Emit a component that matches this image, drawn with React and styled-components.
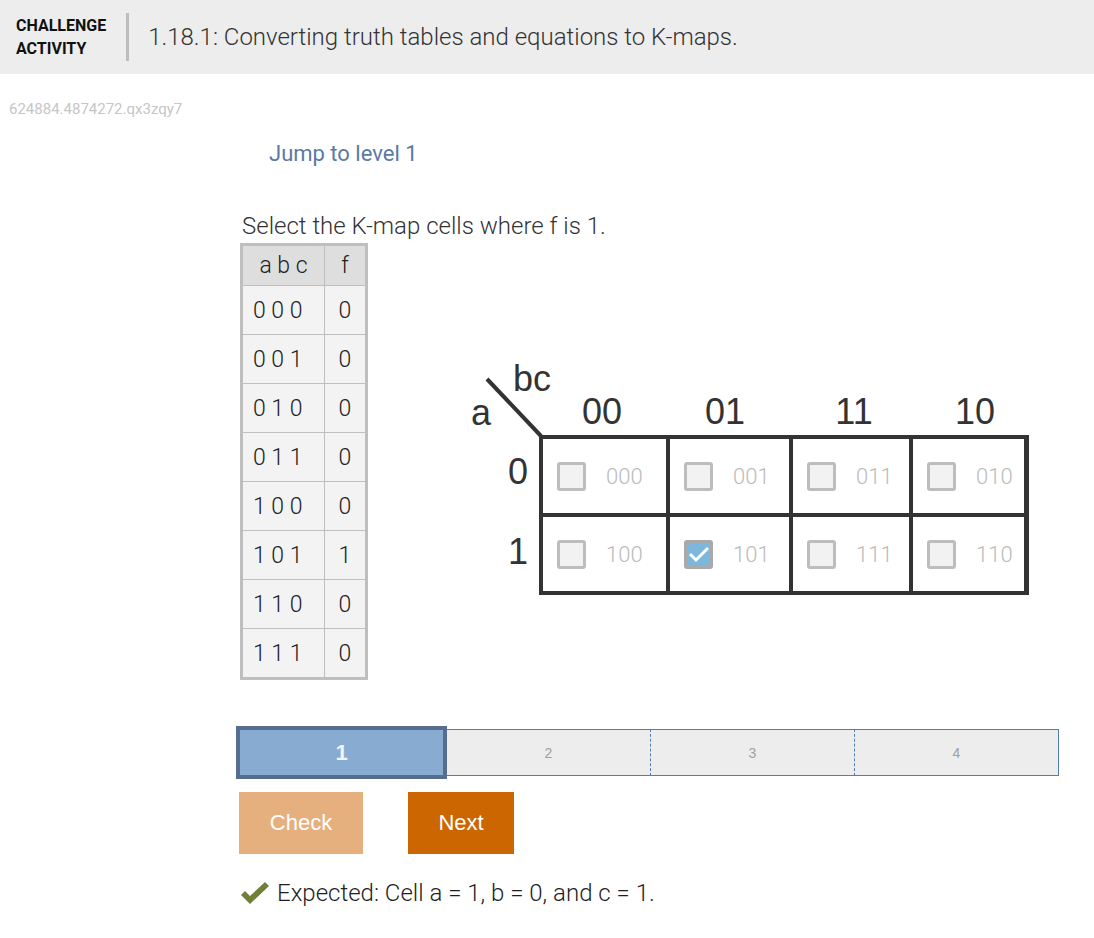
import React from 'react';
import styled, { createGlobalStyle } from 'styled-components';

const GlobalStyle = createGlobalStyle`
  body {
    margin: 0;
    background: #fff;
    font-family: Roboto, "Liberation Sans", sans-serif;
    color: #333;
  }
`;

const Header = styled.div`
  display: flex;
  align-items: center;
  height: 74px;
  padding: 0 16px;
  background-color: #ededed;
`;

const Badge = styled.div`
  font-weight: 700;
  font-size: 16px;
  line-height: 23px;
  color: #111;
`;

const Divider = styled.div`
  width: 3px;
  height: 48px;
  margin: 0 19px 0 20px;
  background-color: #bdbdbd;
`;

const Title = styled.h1`
  margin: 0;
  font-size: 24px;
  font-weight: 300;
  color: #333;
`;

const ActivityId = styled.div`
  margin: 27px 0 0 9px;
  font-size: 15px;
  line-height: 16px;
  color: #c6c6c6;
`;

const Main = styled.div`
  padding-left: 236px;
`;

const JumpLink = styled.div`
  margin: 25px 0 0 33px;
  font-size: 22px;
  line-height: 24px;
  color: #5a7aa4;
`;

const Prompt = styled.div`
  margin: 48px 0 0 6px;
  font-size: 24px;
  font-weight: 300;
  line-height: 24px;
  color: #333;
`;

const Workspace = styled.div`
  display: flex;
  align-items: flex-start;
  margin-top: 5px;
`;

const Truth = styled.table`
  margin-left: 4px;
  border-collapse: collapse;
  border: 3px solid #bfbfbf;
  font-size: 23px;
  font-weight: 300;
  color: #222;
`;

const Th = styled.th`
  height: 39px;
  padding: 0;
  font-weight: 300;
  text-align: center;
  background-color: #dedede;
  border: 1px solid #bfbfbf;
  width: ${p => p.$w}px;
`;

const Td = styled.td`
  height: 48px;
  padding: 0 0 0 ${p => (p.$left ? 10 : 0)}px;
  text-align: ${p => (p.$left ? 'left' : 'center')};
  background-color: #f3f3f3;
  border: 1px solid #bfbfbf;
`;

const KMap = styled.div`
  display: grid;
  grid-template-columns: 75px auto;
  grid-template-rows: 72px auto;
  margin: 120px 0 0 96px;
  font-family: "Liberation Sans", Arial, sans-serif;
  color: #333;
`;

const Corner = styled.div`
  position: relative;
`;

const CornerLabel = styled.span`
  position: absolute;
  font-size: 36px;
  line-height: 1;
  left: ${p => p.$x}px;
  top: ${p => p.$y}px;
`;

const Diagonal = styled.svg`
  position: absolute;
  left: 0;
  top: 0;
  overflow: visible;
`;

const ColLabels = styled.div`
  display: grid;
  grid-template-columns: 126px 120px 138px 104px;
  align-items: end;
  padding-bottom: 5px;
`;

const ColLabel = styled.div`
  font-size: 36px;
  line-height: 1;
  text-align: center;
`;

const RowLabels = styled.div`
  display: flex;
  flex-direction: column;
  margin-top: -3px;
`;

const RowLabel = styled.div`
  height: 80px;
  display: flex;
  align-items: center;
  justify-content: flex-end;
  padding-right: 11px;
  font-size: 36px;
`;

const Grid = styled.div`
  display: grid;
  grid-template-columns: 123px 119px 116px 111px;
  grid-auto-rows: 74px;
  gap: 4px;
  width: max-content;
  padding: 4px 5px 4px 4px;
  background-color: #333;
`;

const Cell = styled.div`
  display: flex;
  align-items: center;
  gap: 20px;
  padding-left: 14px;
  background-color: #fff;
  font-family: Roboto, sans-serif;
  font-size: 22px;
  font-weight: 300;
  color: #bbb;
`;

const Box = styled.div`
  width: 29px;
  height: 29px;
  box-sizing: border-box;
  border: 3px solid ${p => (p.$checked ? '#a9a9a9' : '#bdbdbd')};
  border-radius: 3px;
  background-color: ${p => (p.$checked ? '#7db7dc' : '#f2f2f2')};
  display: flex;
  align-items: center;
  justify-content: center;
`;

const Progress = styled.div`
  display: flex;
  align-items: center;
  width: 823px;
  height: 53px;
  margin-top: 46px;
`;

const Segment = styled.div`
  flex: 1;
  display: flex;
  align-items: center;
  justify-content: center;
  box-sizing: border-box;
  font-family: "Liberation Sans", Arial, sans-serif;
  ${p =>
    p.$active
      ? `
    height: 53px;
    border: 4px solid #566d8f;
    background-color: #87abd1;
    color: #f4f4f4;
    font-size: 22px;
    font-weight: 700;
  `
      : `
    height: 47px;
    background-color: #ededed;
    border-top: 1px solid #4f7fb0;
    border-bottom: 1px solid #4f7fb0;
    border-left: ${p.$dashed ? '1px dashed #4f7fb0' : 'none'};
    border-right: ${p.$last ? '1px solid #4f7fb0' : 'none'};
    color: #a0a0a0;
    font-size: 14px;
  `}
`;

const Buttons = styled.div`
  display: flex;
  gap: 45px;
  margin: 13px 0 0 3px;
`;

const Button = styled.button`
  height: 62px;
  width: ${p => p.$w}px;
  border: none;
  padding: 0;
  font-family: "Liberation Sans", Arial, sans-serif;
  font-size: 22px;
  color: #fff;
  background-color: ${p => p.$bg};
`;

const Result = styled.div`
  display: flex;
  align-items: center;
  gap: 7px;
  margin: 25px 0 0 4px;
  font-size: 24px;
  font-weight: 300;
  color: #1e1e1e;
`;

const rows = [
  ['0 0 0', 0],
  ['0 0 1', 0],
  ['0 1 0', 0],
  ['0 1 1', 0],
  ['1 0 0', 0],
  ['1 0 1', 1],
  ['1 1 0', 0],
  ['1 1 1', 0],
];

const kmap = ['000', '001', '011', '010', '100', '101', '111', '110'];

const CheckMark = () => (
  <svg width="22" height="18" viewBox="0 0 22 18">
    <polyline points="2,9 8,15 20,3" fill="none" stroke="#fff" strokeWidth="3" />
  </svg>
);

const App = () => (
  <>
    <GlobalStyle />
    <Header>
      <Badge>
        CHALLENGE
        <br />
        ACTIVITY
      </Badge>
      <Divider />
      <Title>1.18.1: Converting truth tables and equations to K-maps.</Title>
    </Header>
    <ActivityId>624884.4874272.qx3zqy7</ActivityId>
    <Main>
      <JumpLink>Jump to level 1</JumpLink>
      <Prompt>Select the K-map cells where f is 1.</Prompt>
      <Workspace>
        <Truth>
          <thead>
            <tr>
              <Th $w={81}>a b c</Th>
              <Th $w={40}>f</Th>
            </tr>
          </thead>
          <tbody>
            {rows.map(([abc, f]) => (
              <tr key={abc}>
                <Td $left>{abc}</Td>
                <Td>{f}</Td>
              </tr>
            ))}
          </tbody>
        </Truth>
        <KMap>
          <Corner>
            <Diagonal width="80" height="75">
              <line x1="23" y1="16" x2="77" y2="73" stroke="#333" strokeWidth="4" />
            </Diagonal>
            <CornerLabel $x={7} $y={32}>a</CornerLabel>
            <CornerLabel $x={49} $y={-2}>bc</CornerLabel>
          </Corner>
          <ColLabels>
            {['00', '01', '11', '10'].map(l => (
              <ColLabel key={l}>{l}</ColLabel>
            ))}
          </ColLabels>
          <RowLabels>
            <RowLabel>0</RowLabel>
            <RowLabel>1</RowLabel>
          </RowLabels>
          <Grid>
            {kmap.map(code => (
              <Cell key={code}>
                <Box $checked={code === '101'}>{code === '101' && <CheckMark />}</Box>
                {code}
              </Cell>
            ))}
          </Grid>
        </KMap>
      </Workspace>
      <Progress>
        <Segment $active>1</Segment>
        <Segment>2</Segment>
        <Segment $dashed>3</Segment>
        <Segment $dashed $last>4</Segment>
      </Progress>
      <Buttons>
        <Button $w={124} $bg="#e6b07e">Check</Button>
        <Button $w={106} $bg="#cc6600">Next</Button>
      </Buttons>
      <Result>
        <svg width="30" height="24" viewBox="0 0 30 24">
          <path d="M1 14 L5 10 L10 15 L25 1 L29 5 L10 23 Z" fill="#6f8139" />
        </svg>
        Expected: Cell a = 1, b = 0, and c = 1.
      </Result>
    </Main>
  </>
);

export default App;
